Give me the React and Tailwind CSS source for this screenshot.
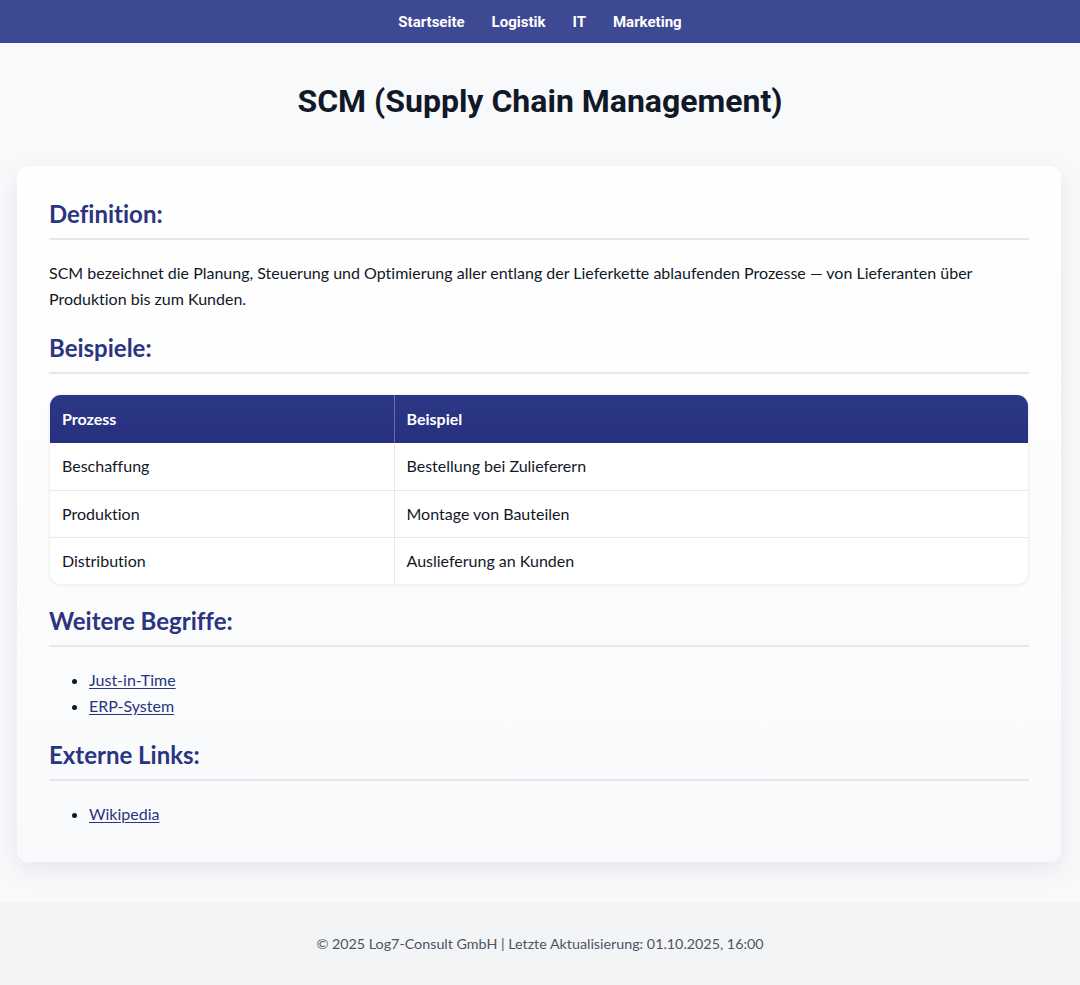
import React from 'react';

const navItems = ['Startseite', 'Logistik', 'IT', 'Marketing'];

const rows = [
  { prozess: 'Beschaffung', beispiel: 'Bestellung bei Zulieferern' },
  { prozess: 'Produktion', beispiel: 'Montage von Bauteilen' },
  { prozess: 'Distribution', beispiel: 'Auslieferung an Kunden' },
];

function SectionTitle({ children, first }) {
  return (
    <h2
      className={`${first ? '' : 'mt-5'} text-[24px] leading-8 font-bold text-[#2b3481] pb-2 border-b-2 border-[#e5e7eb]`}
    >
      {children}
    </h2>
  );
}

function LinkList({ items }) {
  return (
    <ul className="mt-5 list-disc pl-10 marker:text-[#111827]">
      {items.map((item) => (
        <li key={item} className="leading-[26px]">
          <a href="#" className="text-[#2b3481] underline underline-offset-2">
            {item}
          </a>
        </li>
      ))}
    </ul>
  );
}

export default function App() {
  return (
    <div className="min-h-screen bg-[#f8f9fb] flex flex-col font-['Lato','Liberation_Sans',sans-serif] [font-variant-ligatures:none] text-base text-[#111827]">
      {/* Nav */}
      <nav className="h-[43px] pt-px bg-[#3e4993] flex items-center justify-center gap-[27px] font-['Roboto',sans-serif] font-bold text-[15px] text-white">
        {navItems.map((item) => (
          <a key={item} href="#">
            {item}
          </a>
        ))}
      </nav>

      {/* Title */}
      <header className="pt-[38px] pb-[45px] text-center">
        <h1 className="font-['Roboto',sans-serif] font-bold text-[32px] leading-10 text-[#111827]">
          SCM (Supply Chain Management)
        </h1>
      </header>

      {/* Card */}
      <main className="pl-[17px] pr-[19px] pb-10">
        <div className="rounded-xl bg-gradient-to-b from-white to-[#f9fafb] shadow-[0_8px_24px_rgba(17,24,39,0.08)] px-8 pt-8 pb-[35px]">
          <SectionTitle first>Definition:</SectionTitle>
          <p className="mt-5 leading-[26px]">
            SCM bezeichnet die Planung, Steuerung und Optimierung aller entlang der Lieferkette ablaufenden Prozesse — von Lieferanten über Produktion bis zum Kunden.
          </p>

          <SectionTitle>Beispiele:</SectionTitle>
          <div className="mt-5 rounded-xl overflow-hidden bg-white shadow-[0_1px_3px_rgba(0,0,0,0.06)] border border-[#f1f2f4]">
            <table className="w-full border-collapse text-left">
              <thead>
                <tr className="bg-gradient-to-b from-[#2b3785] to-[#283080] text-white">
                  <th className="w-[344px] h-12 px-3 font-bold border-r border-white/30">Prozess</th>
                  <th className="h-12 px-3 font-bold">Beispiel</th>
                </tr>
              </thead>
              <tbody>
                {rows.map((row, i) => (
                  <tr key={row.prozess} className={i > 0 ? 'border-t border-[#e5e7eb]' : ''}>
                    <td className="h-[47px] px-3 border-r border-[#e5e7eb]">{row.prozess}</td>
                    <td className="h-[47px] px-3">{row.beispiel}</td>
                  </tr>
                ))}
              </tbody>
            </table>
          </div>

          <SectionTitle>Weitere Begriffe:</SectionTitle>
          <LinkList items={['Just-in-Time', 'ERP-System']} />

          <SectionTitle>Externe Links:</SectionTitle>
          <LinkList items={['Wikipedia']} />
        </div>
      </main>

      {/* Footer */}
      <footer className="mt-auto bg-[#f3f4f6] h-[83px] flex items-center justify-center text-[14.3px] text-[#4b5563]">
        © 2025 Log7-Consult GmbH | Letzte Aktualisierung: 01.10.2025, 16:00
      </footer>
    </div>
  );
}
